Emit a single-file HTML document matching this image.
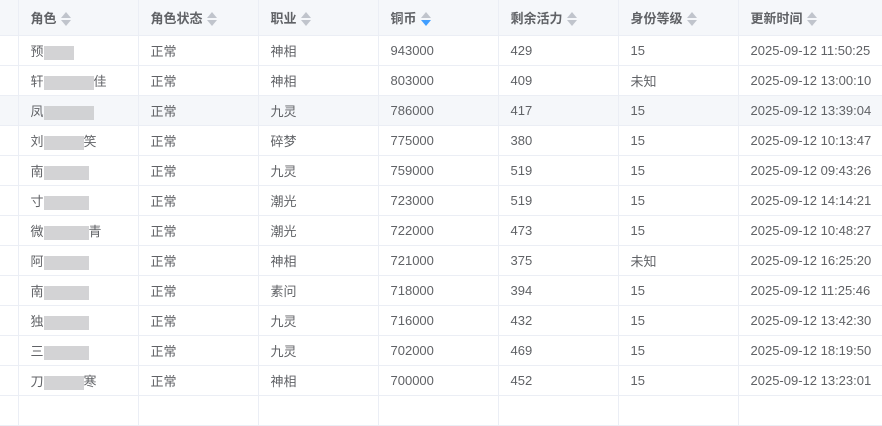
<!DOCTYPE html>
<html><head><meta charset="utf-8"><style>
body{margin:0;width:882px;height:402px;overflow:hidden;background:#fff;font-family:"Liberation Sans","Noto Sans CJK SC",sans-serif;font-size:13px;color:#606266}
table{border-collapse:collapse;table-layout:fixed;width:900px;position:absolute;left:0;top:0}
td,th{border-right:1px solid #ebeef5;border-bottom:1px solid #ebeef5;padding:0 0 0 12px;text-align:left;white-space:nowrap;overflow:hidden}
th{height:35px;background:#f5f7fa;font-weight:bold;color:#606266}
td{height:29px}
tr.h td{background:#f5f7fa}
.s{display:inline-block;vertical-align:middle;margin-left:4px;width:10px;height:16px;position:relative}
.s:before{content:"";position:absolute;left:0;top:1px;border:5px solid transparent;border-bottom:6px solid #c0c4cc;border-top:0}
.s:after{content:"";position:absolute;left:0;top:9px;border:5px solid transparent;border-top:6px solid #c0c4cc;border-bottom:0}
.s.d:after{border-top-color:#409eff}
.b{display:inline-block;vertical-align:middle;height:14px;background:#c8c8ca;opacity:.8}
</style></head><body>
<table>
<colgroup><col style="width:18px"><col style="width:120px"><col style="width:120px"><col style="width:120px"><col style="width:120px"><col style="width:120px"><col style="width:120px"><col style="width:162px"></colgroup>
<tr><th></th><th>角色<span class="s"></span></th><th>角色状态<span class="s"></span></th><th>职业<span class="s"></span></th><th>铜币<span class="s d"></span></th><th>剩余活力<span class="s"></span></th><th>身份等级<span class="s"></span></th><th>更新时间<span class="s"></span></th></tr>
<tr><td></td><td>预<span class="b" style="width:30px"></span></td><td>正常</td><td>神相</td><td>943000</td><td>429</td><td>15</td><td>2025-09-12 11:50:25</td></tr>
<tr><td></td><td>轩<span class="b" style="width:50px"></span>佳</td><td>正常</td><td>神相</td><td>803000</td><td>409</td><td>未知</td><td>2025-09-12 13:00:10</td></tr>
<tr class="h"><td></td><td>凤<span class="b" style="width:50px"></span></td><td>正常</td><td>九灵</td><td>786000</td><td>417</td><td>15</td><td>2025-09-12 13:39:04</td></tr>
<tr><td></td><td>刘<span class="b" style="width:40px"></span>笑</td><td>正常</td><td>碎梦</td><td>775000</td><td>380</td><td>15</td><td>2025-09-12 10:13:47</td></tr>
<tr><td></td><td>南<span class="b" style="width:45px"></span></td><td>正常</td><td>九灵</td><td>759000</td><td>519</td><td>15</td><td>2025-09-12 09:43:26</td></tr>
<tr><td></td><td>寸<span class="b" style="width:45px"></span></td><td>正常</td><td>潮光</td><td>723000</td><td>519</td><td>15</td><td>2025-09-12 14:14:21</td></tr>
<tr><td></td><td>微<span class="b" style="width:45px"></span>青</td><td>正常</td><td>潮光</td><td>722000</td><td>473</td><td>15</td><td>2025-09-12 10:48:27</td></tr>
<tr><td></td><td>阿<span class="b" style="width:45px"></span></td><td>正常</td><td>神相</td><td>721000</td><td>375</td><td>未知</td><td>2025-09-12 16:25:20</td></tr>
<tr><td></td><td>南<span class="b" style="width:45px"></span></td><td>正常</td><td>素问</td><td>718000</td><td>394</td><td>15</td><td>2025-09-12 11:25:46</td></tr>
<tr><td></td><td>独<span class="b" style="width:45px"></span></td><td>正常</td><td>九灵</td><td>716000</td><td>432</td><td>15</td><td>2025-09-12 13:42:30</td></tr>
<tr><td></td><td>三<span class="b" style="width:45px"></span></td><td>正常</td><td>九灵</td><td>702000</td><td>469</td><td>15</td><td>2025-09-12 18:19:50</td></tr>
<tr><td></td><td>刀<span class="b" style="width:40px"></span>寒</td><td>正常</td><td>神相</td><td>700000</td><td>452</td><td>15</td><td>2025-09-12 13:23:01</td></tr>
<tr><td style="height:5px"></td><td></td><td></td><td></td><td></td><td></td><td></td><td></td></tr>
</table>
</body></html>
